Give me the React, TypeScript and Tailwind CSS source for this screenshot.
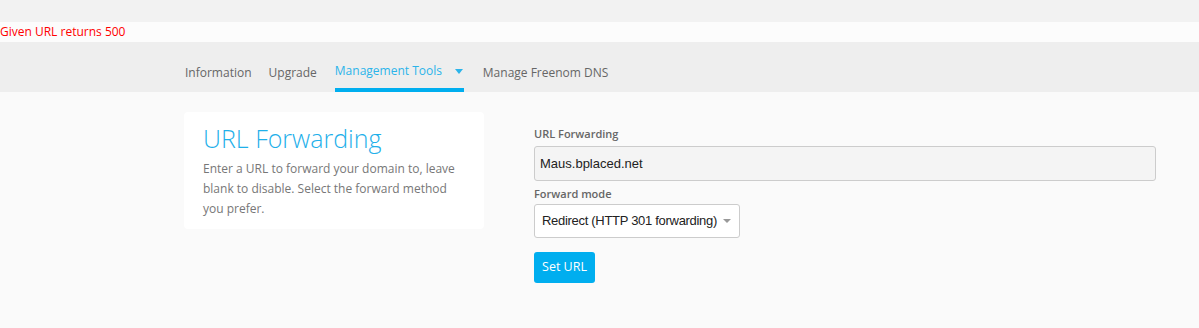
import React from "react";

export default function App() {
  const os = { fontFamily: '"Open Sans", sans-serif' };
  const lib = { fontFamily: '"Liberation Sans", Arial, sans-serif' };
  return (
    <div className="w-[1199px] h-[328px] bg-[#fafafa] overflow-hidden" style={os}>
      <div className="h-[22px] bg-[#f2f2f2]" />
      <div className="h-[20px] bg-[#fcfcfc] flex items-center">
        <span className="text-[12px] text-[#ff0000] leading-none">Given URL returns 500</span>
      </div>
      <div className="h-[50px] bg-[#eeeeee] pl-[184px] flex items-end">
        <nav className="flex text-[12px] text-[#666]">
          <div className="h-[46px] flex items-center pt-[8px] pl-px mr-[17px]">Information</div>
          <div className="h-[46px] flex items-center pt-[8px] mr-[18px]">Upgrade</div>
          <div className="h-[46px] w-[129px] flex items-center pt-[8px] justify-between border-b-4 border-[#00aeef] text-[#2bb4ea] pr-px mr-[19px]">
            <span>Management Tools</span>
            <svg width="8" height="5" viewBox="0 0 8 5"><path d="M0 0h8L4 5z" fill="#2bb4ea" /></svg>
          </div>
          <div className="h-[46px] flex items-center pt-[8px]">Manage Freenom DNS</div>
        </nav>
      </div>
      <div className="flex pl-[184px] pr-[43px] pt-[20px] gap-[50px]">
        <div className="w-[300px] h-[117px] bg-white rounded-[4px] px-[19px] pt-[8px] shrink-0">
          <h1 className="text-[25px] font-light text-[#1fb0ea] leading-[36px] whitespace-nowrap">URL Forwarding</h1>
          <p className="text-[12px] text-[#777] leading-[20px] mt-[3px]">
            Enter a URL to forward your domain to, leave blank to disable. Select the forward method you prefer.
          </p>
        </div>
        <div className="flex-1 pt-[15px]">
          <label className="block text-[11px] font-semibold text-[#666] leading-[14px]">URL Forwarding</label>
          <div
            className="mt-[5px] h-[35px] border border-[#ccc] rounded-[3px] bg-[#f4f4f4] flex items-center px-[5px] text-[13px] text-[#222]"
            style={lib}
          >
            Maus.bplaced.net
          </div>
          <label className="block mt-[6px] text-[11px] font-semibold text-[#666] leading-[14px]">Forward mode</label>
          <div
            className="mt-[3px] w-[206px] h-[34px] border border-[#ccc] rounded-[3px] bg-white flex items-center pl-[7px] text-[13px] text-[#222] whitespace-nowrap relative"
            style={lib}
          >
            <span className="tracking-[-0.3px]">Redirect (HTTP 301 forwarding)</span>
            <svg className="absolute right-[8px] top-[14px]" width="8" height="4" viewBox="0 0 8 4"><path d="M0 0h8L4 4z" fill="#999" /></svg>
          </div>
          <button className="mt-[14px] w-[61px] h-[31px] bg-[#00aeef] rounded-[3px] text-white text-[12.5px] flex items-center justify-center">
            Set URL
          </button>
        </div>
      </div>
    </div>
  );
}
